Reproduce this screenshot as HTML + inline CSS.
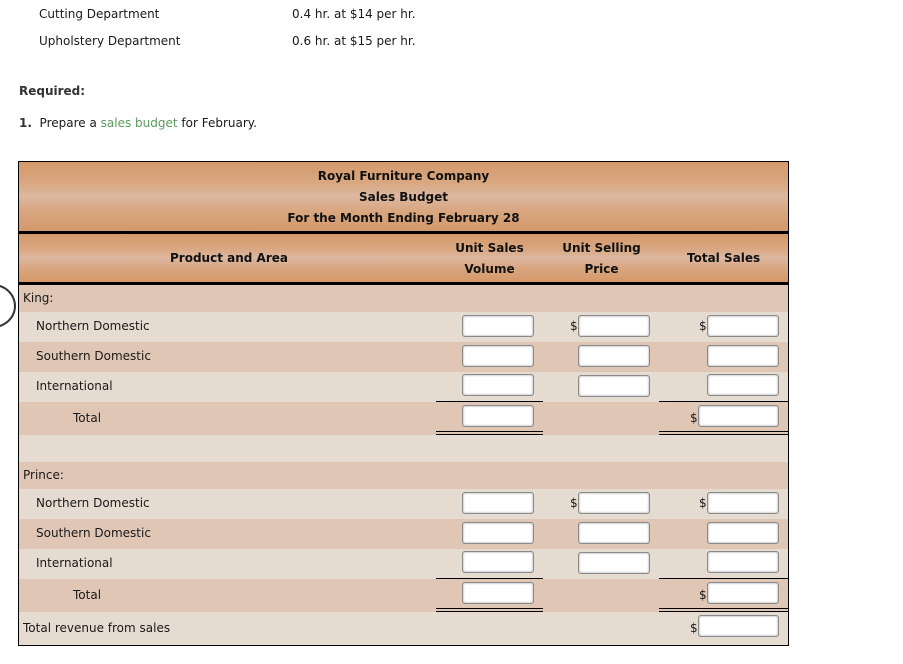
<!DOCTYPE html><html><head><style>
*{margin:0;padding:0;box-sizing:border-box}
body{width:903px;height:664px;background:#fff;font-family:"DejaVu Sans","Liberation Sans",sans-serif;font-size:12px;color:#1a1a1a;position:relative;overflow:hidden}
.a{position:absolute;white-space:nowrap}
.hd{background:linear-gradient(#d4996a 0%,#d9a781 30%,#dcb7a0 50%,#d9a781 70%,#d4996a 100%)}
.r{position:absolute;left:19px;width:769px}
.d{background:#dfc6b5}.l{background:#e6dbd0}
.in{position:absolute;height:22px;width:72px;background:#fff;border:1px solid #8a8a8a;border-radius:3px;box-shadow:inset 0 0 2px #999}
.b{font-weight:bold;color:#111}
.ln{position:absolute;height:1px;background:#000}
.dl{position:absolute;height:4px;border-top:1px solid #000;border-bottom:1px solid #000}
</style></head><body>
<div class="a" style="left:39px;top:7px">Cutting Department</div>
<div class="a" style="left:292px;top:7px">0.4 hr. at $14 per hr.</div>
<div class="a" style="left:39px;top:34px">Upholstery Department</div>
<div class="a" style="left:292px;top:34px">0.6 hr. at $15 per hr.</div>
<div class="a b" style="left:19px;top:84px;color:#333">Required:</div>
<div class="a" style="left:19px;top:116px"><b style="color:#333">1.</b>&nbsp; Prepare a <span style="color:#5a9a5a">sales budget</span> for February.</div>

<div style="position:absolute;left:18px;top:161px;width:771px;height:485px;border:1px solid #000;background:#e6dbd0"></div>
<div class="r hd" style="top:162px;height:69px"></div>
<div class="a b" style="left:19px;width:769px;text-align:center;top:166px;line-height:21px">Royal Furniture Company<br>Sales Budget<br>For the Month Ending February 28</div>
<div class="r" style="top:231px;height:3px;background:#000"></div>
<div class="r hd" style="top:234px;height:48px"></div>
<div class="r" style="top:282px;height:3px;background:#000"></div>
<div class="a b" style="left:170px;top:251px">Product and Area</div>
<div class="a b" style="left:436px;width:107px;text-align:center;top:238px;line-height:21px">Unit Sales<br>Volume</div>
<div class="a b" style="left:548px;width:107px;text-align:center;top:238px;line-height:21px">Unit Selling<br>Price</div>
<div class="a b" style="left:687px;top:251px">Total Sales</div>

<div class="r d" style="top:285px;height:27px"></div>
<div class="r l" style="top:312px;height:30px"></div>
<div class="r d" style="top:342px;height:30px"></div>
<div class="r l" style="top:372px;height:30px"></div>
<div class="r d" style="top:402px;height:33px"></div>
<div class="r l" style="top:435px;height:27px"></div>
<div class="r d" style="top:462px;height:27px"></div>
<div class="r l" style="top:489px;height:30px"></div>
<div class="r d" style="top:519px;height:30px"></div>
<div class="r l" style="top:549px;height:30px"></div>
<div class="r d" style="top:579px;height:33px"></div>
<div class="r l" style="top:612px;height:33px"></div>

<div style="position:absolute;left:-30px;top:284px;width:46px;height:44px;border:2px solid #333;border-radius:50%"></div>

<div class="a" style="left:23px;top:291px">King:</div>
<div class="a" style="left:36px;top:319px">Northern Domestic</div>
<div class="a" style="left:36px;top:349px">Southern Domestic</div>
<div class="a" style="left:36px;top:379px">International</div>
<div class="a" style="left:73px;top:411px">Total</div>
<div class="a" style="left:23px;top:468px">Prince:</div>
<div class="a" style="left:36px;top:496px">Northern Domestic</div>
<div class="a" style="left:36px;top:526px">Southern Domestic</div>
<div class="a" style="left:36px;top:556px">International</div>
<div class="a" style="left:73px;top:588px">Total</div>
<div class="a" style="left:23px;top:621px">Total revenue from sales</div>

<div class="in" style="left:462px;top:315px"></div><div class="a" style="left:570px;top:319px">$</div><div class="in" style="left:578px;top:315px"></div><div class="a" style="left:699px;top:319px">$</div><div class="in" style="left:707px;top:315px"></div>
<div class="in" style="left:462px;top:345px"></div><div class="in" style="left:578px;top:345px"></div><div class="in" style="left:707px;top:345px"></div>
<div class="in" style="left:462px;top:374px"></div><div class="in" style="left:578px;top:375px"></div><div class="in" style="left:707px;top:374px"></div>
<div class="ln" style="left:436px;width:107px;top:401px"></div><div class="ln" style="left:659px;width:129px;top:401px"></div>
<div class="in" style="left:462px;top:405px"></div><div class="a" style="left:690px;top:411px">$</div><div class="in" style="left:698px;top:405px;width:81px"></div>
<div class="dl" style="left:436px;width:107px;top:431px"></div><div class="dl" style="left:659px;width:129px;top:431px"></div>
<div class="in" style="left:462px;top:492px"></div><div class="a" style="left:570px;top:496px">$</div><div class="in" style="left:578px;top:492px"></div><div class="a" style="left:699px;top:496px">$</div><div class="in" style="left:707px;top:492px"></div>
<div class="in" style="left:462px;top:522px"></div><div class="in" style="left:578px;top:522px"></div><div class="in" style="left:707px;top:522px"></div>
<div class="in" style="left:462px;top:551px"></div><div class="in" style="left:578px;top:552px"></div><div class="in" style="left:707px;top:551px"></div>
<div class="ln" style="left:436px;width:107px;top:578px"></div><div class="ln" style="left:659px;width:129px;top:578px"></div>
<div class="in" style="left:462px;top:582px"></div><div class="a" style="left:699px;top:588px">$</div><div class="in" style="left:707px;top:582px"></div>
<div class="dl" style="left:436px;width:107px;top:608px"></div><div class="dl" style="left:659px;width:129px;top:608px"></div>
<div class="a" style="left:690px;top:621px">$</div><div class="in" style="left:698px;top:615px;width:81px"></div>
</body></html>
